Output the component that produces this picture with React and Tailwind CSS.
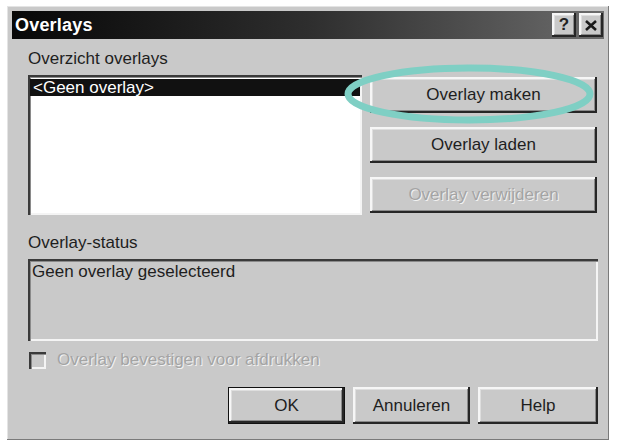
import React from 'react';

const raised =
  'shadow-[inset_-2px_-2px_0_#262626,inset_2px_2px_0_#f6f6f6,inset_-3px_-3px_0_#8a8a8a,inset_3px_3px_0_#dedede]';
const sunken =
  'shadow-[inset_2px_2px_0_#3a3a3a,inset_3px_3px_0_#8a8a8a,inset_-2px_-2px_0_#f4f4f4]';
const disabledText = 'text-[#a4a4a4] [text-shadow:1px_1px_0_#f2f2f2]';

const SideButton = ({ label, disabled }) => (
  <div
    className={`h-[36px] flex items-center justify-center bg-[#c9c9c9] ${raised} ${
      disabled ? disabledText : 'text-[#1e1e1e]'
    }`}
  >
    {label}
  </div>
);

const FooterButton = ({ label, width, isDefault }) => (
  <div
    className={`h-[37px] flex items-center justify-center bg-[#c9c9c9] text-[#1e1e1e] ${width} ${raised} ${
      isDefault ? 'border border-[#111]' : ''
    }`}
  >
    {label}
  </div>
);

const App = () => {
  return (
    <div className="relative w-[618px] h-[443px] bg-white pt-[6px] pl-[7px] font-['Liberation_Sans',Arial,sans-serif] text-[17px] leading-[18px] text-[#1e1e1e]">
      <div className="w-[602px] h-[434px] bg-[#c9c9c9] p-[5px] flex flex-col shadow-[inset_-1px_-1px_0_#7a7a7a,inset_1px_1px_0_#e4e4e4]">
        {/* Title bar */}
        <div className="h-[28px] flex items-center justify-between pl-[3px] pr-[1px] bg-gradient-to-r from-[#080808] via-[#2e2e2e] to-[#6c6c6c]">
          <span className="text-white font-bold text-[18px] tracking-[0.2px]">Overlays</span>
          <div className="flex gap-[3px]">
            <div className={`w-[24px] h-[24px] flex items-center justify-center bg-[#c9c9c9] font-bold text-[17px] text-[#222] ${raised}`}>
              ?
            </div>
            <div className={`w-[24px] h-[24px] flex items-center justify-center bg-[#c9c9c9] ${raised}`}>
              <svg width="12" height="11" viewBox="0 0 12 11">
                <path d="M1 1 L11 10 M11 1 L1 10" stroke="#1a1a1a" strokeWidth="2.6" />
              </svg>
            </div>
          </div>
        </div>

        <div className="flex flex-col pl-[16px] pr-[6px]">
          {/* Overview + actions */}
          <div className="flex gap-[8px] mt-[11px]">
            <div className="w-[334px] flex flex-col">
              <span>Overzicht overlays</span>
              <div className={`mt-[7px] h-[140px] bg-white pt-[4px] pl-[2px] pr-[2px] ${sunken}`}>
                <div className="h-[17px] leading-[17px] bg-[#111] text-white pl-[3px]">&lt;Geen overlay&gt;</div>
              </div>
            </div>
            <div className="w-[227px] flex flex-col gap-[14px] pt-[27px]">
              <SideButton label="Overlay maken" />
              <SideButton label="Overlay laden" />
              <SideButton label="Overlay verwijderen" disabled />
            </div>
          </div>

          {/* Status */}
          <span className="mt-[19px]">Overlay-status</span>
          <div className={`mt-[7px] h-[82px] pl-[4px] pt-[4px] ${sunken}`}>Geen overlay geselecteerd</div>

          {/* Checkbox */}
          <div className="mt-[10px] h-[18px] flex items-center gap-[11px]">
            <div className={`w-[17px] h-[17px] ml-[1px] bg-[#c9c9c9] ${sunken}`} />
            <span className={disabledText}>Overlay bevestigen voor afdrukken</span>
          </div>

          {/* Footer buttons */}
          <div className="mt-[18px] flex justify-end gap-[8px]">
            <FooterButton label="OK" width="w-[117px]" isDefault />
            <FooterButton label="Annuleren" width="w-[117px]" />
            <FooterButton label="Help" width="w-[120px]" />
          </div>
        </div>
      </div>

      {/* highlight ring around "Overlay maken" */}
      <svg className="absolute left-[340px] top-[58px]" width="262" height="72" viewBox="0 0 262 72">
        <ellipse cx="129" cy="36" rx="121" ry="26" fill="none" stroke="#7fcfc4" strokeWidth="7" />
      </svg>
    </div>
  );
};

export default App;
